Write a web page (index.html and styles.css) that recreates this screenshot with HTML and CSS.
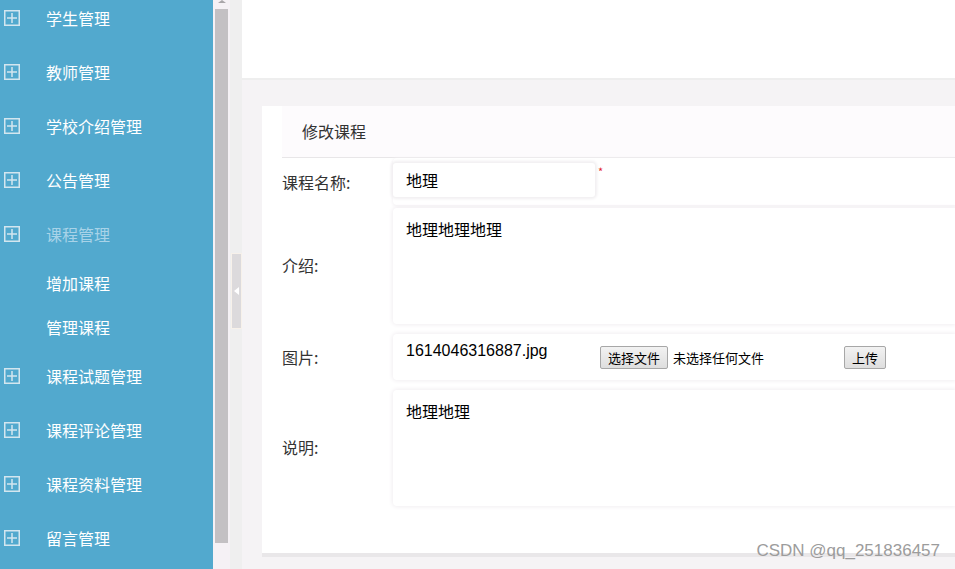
FILE: index.html
```html
<!DOCTYPE html>
<html>
<head>
  <meta charset="utf-8">
  <title>修改课程</title>
  <link rel="stylesheet" href="styles.css">
</head>
<body>

  <div class="sidebar">
    <ul class="menu">
      <li class="item"><svg class="ico" viewBox="0 0 16 16"><rect x="0.75" y="0.75" width="14.5" height="14.5"/><path d="M8 3v10M3 8h10"/></svg><span>学生管理</span></li>
      <li class="item"><svg class="ico" viewBox="0 0 16 16"><rect x="0.75" y="0.75" width="14.5" height="14.5"/><path d="M8 3v10M3 8h10"/></svg><span>教师管理</span></li>
      <li class="item"><svg class="ico" viewBox="0 0 16 16"><rect x="0.75" y="0.75" width="14.5" height="14.5"/><path d="M8 3v10M3 8h10"/></svg><span>学校介绍管理</span></li>
      <li class="item"><svg class="ico" viewBox="0 0 16 16"><rect x="0.75" y="0.75" width="14.5" height="14.5"/><path d="M8 3v10M3 8h10"/></svg><span>公告管理</span></li>
      <li class="item active"><svg class="ico" viewBox="0 0 16 16"><rect x="0.75" y="0.75" width="14.5" height="14.5"/><path d="M8 3v10M3 8h10"/></svg><span>课程管理</span></li>
      <li class="sub">增加课程</li>
      <li class="sub">管理课程</li>
      <li class="item"><svg class="ico" viewBox="0 0 16 16"><rect x="0.75" y="0.75" width="14.5" height="14.5"/><path d="M8 3v10M3 8h10"/></svg><span>课程试题管理</span></li>
      <li class="item"><svg class="ico" viewBox="0 0 16 16"><rect x="0.75" y="0.75" width="14.5" height="14.5"/><path d="M8 3v10M3 8h10"/></svg><span>课程评论管理</span></li>
      <li class="item"><svg class="ico" viewBox="0 0 16 16"><rect x="0.75" y="0.75" width="14.5" height="14.5"/><path d="M8 3v10M3 8h10"/></svg><span>课程资料管理</span></li>
      <li class="item"><svg class="ico" viewBox="0 0 16 16"><rect x="0.75" y="0.75" width="14.5" height="14.5"/><path d="M8 3v10M3 8h10"/></svg><span>留言管理</span></li>
    </ul>
  </div>

  <div class="scrollbar">
    <div class="arrow"></div>
    <div class="thumb"></div>
  </div>

  <div class="splitter">
    <div class="handle"><span class="tri"></span></div>
  </div>

  <div class="main">
    <div class="topbar"></div>

    <div class="content">
      <div class="panel">
        <div class="panel-title">修改课程</div>

        <div class="row row-name">
          <div class="label">课程名称:</div>
          <div class="field">
            <div class="input">地理</div>
            <span class="req">*</span>
          </div>
        </div>

        <div class="row row-big">
          <div class="label">介绍:</div>
          <div class="field area">地理地理地理</div>
        </div>

        <div class="row row-pic">
          <div class="label">图片:</div>
          <div class="field pic">
            <span class="filename">1614046316887.jpg</span>
            <span class="btn choose">选择文件</span>
            <span class="nofile">未选择任何文件</span>
            <span class="btn upload">上传</span>
          </div>
        </div>

        <div class="row row-big">
          <div class="label">说明:</div>
          <div class="field area">地理地理</div>
        </div>
      </div>
    </div>

    <div class="watermark">CSDN @qq_251836457</div>
  </div>

</body>
</html>
```

FILE: styles.css
```css
body {
  margin: 0;
  height: 569px;
  overflow: hidden;
  display: flex;
  font-family: 'Noto Sans CJK SC', 'Liberation Sans', sans-serif;
  background-color: #f5f3f5;
}

/* left menu */
.sidebar {
  width: 213px;
  flex-shrink: 0;
  background-color: #52a9ce;
  overflow: hidden;
}
.menu {
  list-style: none;
  margin: -9px 0 0 0;
  padding: 0;
}
.item {
  height: 54px;
  display: flex;
  align-items: center;
  color: #fff;
  font-size: 16px;
}
.item.active {
  color: #a8d3e8;
}
.ico {
  width: 16px;
  height: 16px;
  margin: 0 26px 0 4px;
  fill: none;
  stroke: #d3e6ef;
  stroke-width: 1.5;
}
.sub {
  height: 44px;
  line-height: 44px;
  padding-left: 46px;
  color: #fff;
  font-size: 16px;
}

/* fake scrollbar */
.scrollbar {
  width: 17px;
  flex-shrink: 0;
  background-color: #f5f1f5;
  position: relative;
}
.arrow {
  width: 0;
  height: 0;
  margin: 0 auto;
  border-left: 4px solid transparent;
  border-right: 4px solid transparent;
  border-bottom: 3px solid #a9a6a9;
}
.thumb {
  margin: 6px 2px 0 2px;
  height: 534px;
  background-color: #c3c0c3;
}

.splitter {
  width: 12px;
  flex-shrink: 0;
  background-color: #efefef;
  padding-top: 253px;
}
.handle {
  width: 9px;
  height: 74px;
  margin-left: 1px;
  background-color: #dcdadc;
  border: 1px solid #f7f1ea;
  display: flex;
  align-items: center;
  justify-content: center;
}
.tri {
  width: 0;
  height: 0;
  border-top: 4px solid transparent;
  border-bottom: 4px solid transparent;
  border-right: 5px solid #fff;
}

/* main area */
.main {
  flex: 1;
  position: relative;
}
.topbar {
  height: 78px;
  background-color: #fff;
  border-bottom: 2px solid #eeeeee;
}
.content {
  padding: 26px 0 0 20px;
}
.panel {
  height: 447px;
  background-color: #fff;
  padding-left: 20px;
  box-shadow: 0 4px 0 #e9e7e9;
}
.panel-title {
  height: 51px;
  line-height: 51px;
  padding-left: 20px;
  background-color: #fdfbfd;
  border-bottom: 1px solid #e8e6e8;
  font-size: 16px;
  color: #333;
}

.row {
  display: flex;
}
.row-name {
  height: 47px;
}
.row-big {
  height: 116px;
  margin-top: 3px;
}
.row-pic {
  height: 46px;
  margin-top: 10px;
  margin-bottom: 10px;
}
.label {
  width: 111px;
  flex-shrink: 0;
  display: flex;
  align-items: center;
  font-size: 16px;
  color: #333;
}
.row-big .label {
  padding-bottom: 2px;
}
.row-name .label {
  align-items: flex-start;
  padding-top: 12px;
}
.field {
  flex: 1;
  background-color: #fff;
  border-radius: 4px 0 0 4px;
  box-shadow: 0 0 4px 1px #f1eef1;
  font-size: 16px;
  color: #000;
}
.row-name .field {
  display: flex;
  align-items: flex-start;
  box-shadow: 0 1px 3px 1px #f6f4f6;
}
.input {
  width: 189px;
  height: 34px;
  line-height: 34px;
  margin-top: 5px;
  padding-left: 13px;
  background-color: #fff;
  border-radius: 3px;
  box-shadow: 0 0 3px 2px #f1eff1;
}
.req {
  color: #e2262b;
  font-size: 11px;
  margin: 5px 0 0 3px;
}
.area {
  padding: 11px 0 0 13px;
  line-height: 20px;
}
.pic {
  display: flex;
  align-items: flex-start;
  padding-left: 13px;
}
.filename {
  font-family: 'Liberation Sans', sans-serif;
  width: 194px;
  margin-top: 8px;
  line-height: 18px;
}
.btn {
  margin-top: 12px;
  height: 21px;
  line-height: 21px;
  padding: 0 7px;
  font-size: 13px;
  color: #000;
  border: 1px solid #a7a7a7;
  border-radius: 2px;
  background: linear-gradient(#f2f2f2, #dedede);
}
.nofile {
  margin: 12px 0 0 5px;
  line-height: 23px;
  font-size: 13px;
  width: 171px;
}
.upload {
  padding: 0 7px;
}

.watermark {
  position: absolute;
  right: 15px;
  bottom: 8px;
  font-family: 'Liberation Sans', sans-serif;
  font-size: 17px;
  color: #9c9c9c;
}
```
